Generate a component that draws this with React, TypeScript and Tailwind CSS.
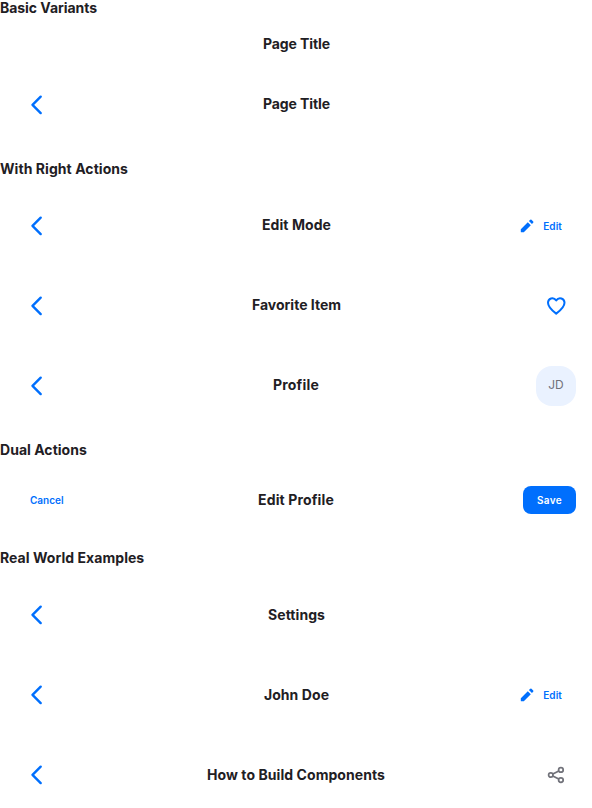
import React from "react";

function Heading({ children, className = "" }: { children: React.ReactNode; className?: string }) {
  return <h3 className={`h-[17px] text-sm font-bold ${className}`}>{children}</h3>;
}

function Chevron({ className = "" }: { className?: string }) {
  return (
    <button className={`flex size-10 items-center justify-center text-[#006ffd] ${className}`}>
      <svg width="20" height="20" viewBox="0 0 20 20" fill="none" stroke="currentColor" strokeWidth="2.400" strokeLinecap="round" strokeLinejoin="round">
        <path d="M14.700 1.700L6.500 9.900L14.700 18.100" />
      </svg>
    </button>
  );
}

function Edit() {
  return (
    <button className="flex items-center gap-[9px] pr-3.5 text-[10px] font-semibold tracking-[0.1px] text-[#006ffd]">
      <svg width="14" height="14" viewBox="0 0 14 14" fill="currentColor">
        <path d="M0.800 10.200L7.800 3.200L10.800 6.200L3.800 13.200H1.300Q0.800 13.200 0.800 12.700Z M8.900 2.100L10.300 0.800Q10.900 0.300 11.500 0.800L13.200 2.500Q13.700 3.100 13.200 3.700L11.900 5.100Z" />
      </svg>
      Edit
    </button>
  );
}

type NavBarProps = {
  title: string;
  left?: React.ReactNode;
  right?: React.ReactNode;
  className?: string;
  titleClass?: string;
};

function NavBar({ title, left, right, className = "h-20", titleClass = "" }: NavBarProps) {
  return (
    <nav className={`grid grid-cols-[1fr_auto_1fr] items-center px-4 ${className}`}>
      <div className="flex justify-start">{left}</div>
      <h2 className={`text-sm leading-[17px] font-bold ${titleClass}`}>{title}</h2>
      <div className="flex justify-end">{right}</div>
    </nav>
  );
}

export default function App() {
  return (
    <main className="h-[808px] w-[592px] overflow-hidden bg-white font-['Inter',sans-serif] text-[#1f2024]">
      <Heading className="leading-[15px] tracking-[-0.04px]">Basic Variants</Heading>
      <NavBar title="Page Title" className="h-[54px]" titleClass="mb-px pl-px tracking-[-0.09px]" />
      <NavBar title="Page Title" className="h-[66px]" titleClass="mb-px pl-px tracking-[-0.09px]" left={<Chevron className="mt-0.5" />} />
      <Heading className="mt-6 leading-[15px] tracking-[0.06px]">With Right Actions</Heading>
      <div className="pt-2">
        <NavBar title="Edit Mode" titleClass="mb-[3px] pl-px tracking-[0.08px]" left={<Chevron />} right={<Edit />} />
        <NavBar title="Favorite Item" titleClass="mb-[3px] pl-px" left={<Chevron />} right={
          <button className="flex size-10 items-center justify-center text-[#006ffd]">
            <svg width="20" height="20" viewBox="0 0 20 20" fill="none" stroke="currentColor" strokeWidth="2" strokeLinejoin="round">
              <path d="M10.200 17.600C7 15.200 2 11.200 2 6.700C2 2.500 7.300 0.300 10.200 4.400C13.100 0.300 18.500 2.500 18.500 6.700C18.500 11.200 13.400 15.200 10.200 17.600Z" />
            </svg>
          </button>} />
        <NavBar title="Profile" titleClass="mb-[3px] tracking-[0.2px]" left={<Chevron />} right={
          <div className="flex size-10 items-center justify-center rounded-2xl bg-[#eaf2ff] pb-0.5 text-xs text-[#71727a]">JD</div>} />
      </div>
      <Heading className="mt-[15px] leading-[17px] tracking-[0.03px]">Dual Actions</Heading>
      <NavBar title="Edit Profile" className="mt-[1px] h-[82px]" titleClass="mb-px tracking-[0.15px]" left={
        <button className="pl-3.5 text-[10px] font-semibold text-[#006ffd]">Cancel</button>} right={
        <button className="h-7 w-[53px] rounded-lg bg-[#006ffd] text-[10px] font-semibold tracking-[0.3px] text-white">Save</button>} />
      <Heading className="mt-2 leading-[17px] tracking-[0.05px]">Real World Examples</Heading>
      <div className="pt-[9px]">
        <NavBar title="Settings" titleClass="mb-px pl-px tracking-[0.07px]" left={<Chevron />} />
        <NavBar title="John Doe" titleClass="mb-px pl-px tracking-[0.08px]" left={<Chevron />} right={<Edit />} />
        <NavBar title="How to Build Components" titleClass="mb-px tracking-[0.07px]" left={<Chevron />} right={
          <button className="flex size-10 items-center justify-center text-[#71727a]">
            <svg width="18" height="18" viewBox="0 0 18 18" fill="none" stroke="currentColor" strokeWidth="1.700">
              <circle cx="3.800" cy="9" r="2.200" /><circle cx="13.900" cy="3.900" r="2.300" /><circle cx="13.900" cy="14.100" r="2.300" />
              <path d="M5.800 8L11.800 4.900M5.800 10L11.800 13.100" />
            </svg>
          </button>} />
      </div>
    </main>
  );
}
